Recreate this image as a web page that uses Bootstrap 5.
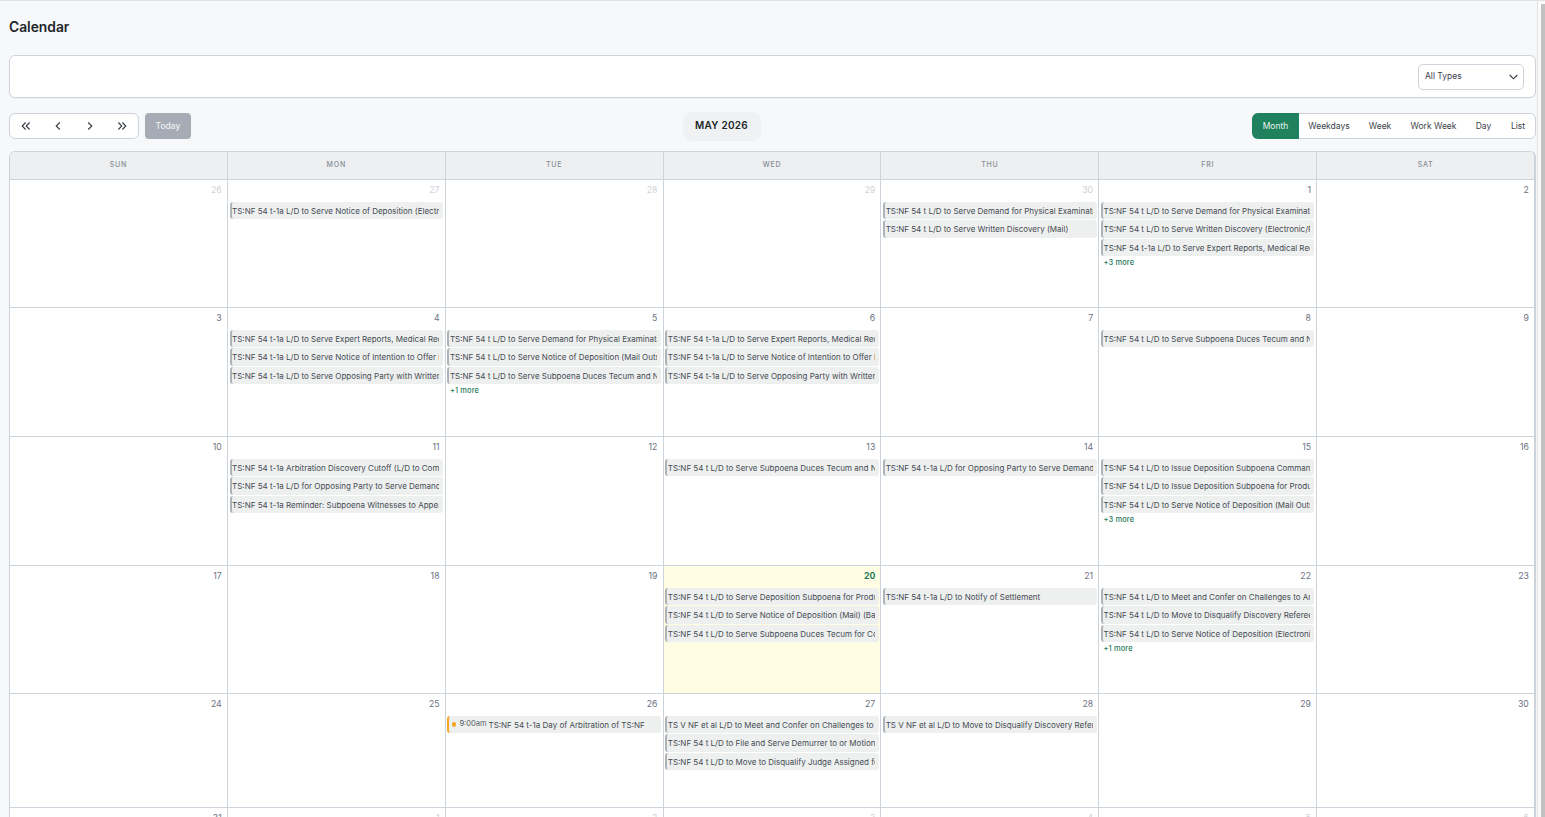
<!DOCTYPE html>
<html lang="en"><head><meta charset="utf-8"><title>Calendar</title>
<link href="https://cdn.jsdelivr.net/npm/bootstrap@5.3.0/dist/css/bootstrap.min.css" rel="stylesheet">
<style>
html,body{height:100%;overflow:hidden}
body{font-family:Inter,"Liberation Sans",sans-serif;background:#f7f8fa;color:#212529}
.shell{height:817px;border-top:1px solid #dfe3e2}
.page{width:1537px;padding:0 1px 0 9px;overflow:hidden;flex:none}
.sbar{width:8px;flex:none;background:#fbfbfb;border-left:1px solid #dfe3e8;padding:3px 0 0 3px}
.sbar div{height:100%;background:#c1c1c1}
h1.title{font-size:13.8px;font-weight:600;line-height:18px;margin:17px 0 19px}
.filter{height:43px;border-color:#cdd3da;border-radius:6px;padding:8px 11px 0 0;box-shadow:0 1px 1px rgba(0,0,0,.03)}
.filter .form-select{width:106px;height:26px;font-size:8.5px;padding:0 0 2px 6px;border-color:#cdd3da;border-radius:5px;color:#3b4149;background-image:none}
.sel{position:relative;width:106px}
.sel svg{position:absolute;right:6px;top:10px;pointer-events:none}
.toolbar{height:30px;margin:13px 0 10px}
.btn-group.cal{background:#fff;border:1px solid #cdd3da;border-radius:6px;height:26px}
.btn-group.cal>.btn,.btn-group.cal>.btn+.btn{border:0;font-size:8.5px;color:#3b4149;padding:0;height:24px;line-height:21px;margin-left:0;flex:none}
.btn-group.cal>.nav-btn{width:32px;display:flex;align-items:center;justify-content:center}
.btn-today{width:46px;height:26px;padding:0;font-size:8.5px;background:#a5acb5;color:#eef0f2;border:0;border-radius:4px;line-height:21px;margin-left:6px;font-weight:500}
.month{font-size:10px;font-weight:600;letter-spacing:.25px;background:#eff1f2;border-radius:9px;width:78px;height:29px;line-height:27px;text-align:center;color:#212529}
.btn-group.cal>.view-on{background:#20815f;color:#e8f3ef;width:47px;height:26px;line-height:23px;margin:-1px 0 -1px -1px;border-radius:6px 0 0 6px}
.btn-group.cal>.b1{width:60px}.btn-group.cal>.b2{width:42px}.btn-group.cal>.b3{width:65px}
.btn-group.cal>.b4{width:35px;border-left:1px solid #cdd3da}.btn-group.cal>.b5{width:34px}
.grid{background:#fff;border:1px solid #cdd3da;border-right-width:2px;border-bottom:0;border-radius:6px 6px 0 0;overflow:hidden}
.wk{display:flex}
.wk.head{height:28px;background:#edeff0}
.h128{height:128px}.h129{height:129px}.h114{height:114px}
.cell{flex:1 1 0;min-width:0;border-right:1px solid #cdd3da;border-bottom:1px solid #cdd3da;padding:0 1.7px}
.cell:last-child{border-right:0}
.head .cell{font-size:7px;letter-spacing:.8px;font-weight:500;color:#868e96;text-align:center;line-height:25px}
.num{font-size:8.7px;color:#6b7280;text-align:right;height:22px;line-height:20px;padding-right:3.5px}
.num.off{color:#ced1d5}
.today{background:#fffde3}
.today .num{color:#1f7a5a;font-weight:700}
.ev{height:17.3px;margin-bottom:1.2px;background:#eef0f0;border-left:2px solid #b0b3b6;border-radius:3px;padding:0 4px 0 .5px;font-size:8px;line-height:18.2px;color:#454b52}
.ev span{display:block;overflow:hidden;white-space:nowrap;height:17.3px}
.ev.timed{border-left-color:#f5a623}
.ev.timed span{display:flex;align-items:center}
.ev i{width:4.5px;height:4.5px;border-radius:50%;background:#f5a623;margin:0 3px 0 2px;flex:none}
.ev small{font-size:7.5px;margin:-2px 2px 0 0;color:#555b62}
.more{font-size:7.5px;font-weight:500;letter-spacing:.1px;color:#1f7a5a;padding-left:2.5px;line-height:11px;display:block;text-decoration:none}
</style></head>
<body>
<div class="shell d-flex">
<div class="page">
<h1 class="title">Calendar</h1>
<div class="card filter d-flex flex-row justify-content-end">
  <div class="sel"><select class="form-select"><option>All Types</option></select>
  <svg width="9" height="6" viewBox="0 0 9 6" fill="none" stroke="#343a40" stroke-width="1.1"><path d="M.7 1l3.8 3.8L8.3 1"/></svg></div>
</div>
<div class="toolbar d-flex align-items-center justify-content-between">
  <div class="d-flex">
    <div class="btn-group cal">
      <button class="btn nav-btn" aria-label="Previous year"><svg width="10" height="10" viewBox="0 0 10 10" fill="none" stroke="#343a40" stroke-width="1.1"><path d="M4.6 1.5L1.2 5l3.4 3.5M8.6 1.5L5.2 5l3.4 3.5"/></svg></button>
      <button class="btn nav-btn" aria-label="Previous"><svg width="10" height="10" viewBox="0 0 10 10" fill="none" stroke="#343a40" stroke-width="1.1"><path d="M6.8 1.5L3.2 5l3.6 3.5"/></svg></button>
      <button class="btn nav-btn" aria-label="Next"><svg width="10" height="10" viewBox="0 0 10 10" fill="none" stroke="#343a40" stroke-width="1.1"><path d="M3.2 1.5L6.8 5 3.2 8.5"/></svg></button>
      <button class="btn nav-btn" aria-label="Next year"><svg width="10" height="10" viewBox="0 0 10 10" fill="none" stroke="#343a40" stroke-width="1.1"><path d="M1.4 1.5L4.8 5 1.4 8.5M5.4 1.5L8.8 5 5.4 8.5"/></svg></button>
    </div>
    <button class="btn btn-today">Today</button>
  </div>
  <div class="month">MAY 2026</div>
  <div class="d-flex justify-content-end">
    <div class="btn-group cal">
      <button class="btn view-on">Month</button><button class="btn b1">Weekdays</button><button class="btn b2">Week</button><button class="btn b3">Work Week</button><button class="btn b4">Day</button><button class="btn b5">List</button>
    </div>
  </div>
</div>
<div class="grid">
  <div class="wk head"><div class="cell">SUN</div><div class="cell">MON</div><div class="cell">TUE</div><div class="cell">WED</div><div class="cell">THU</div><div class="cell">FRI</div><div class="cell">SAT</div></div>

  <div class="wk h128">
    <div class="cell"><div class="num off">26</div></div>
    <div class="cell"><div class="num off">27</div><div class="ev"><span>TS:NF 54 t-1a L/D to Serve Notice of Deposition (Electronic)</span></div></div>
    <div class="cell"><div class="num off">28</div></div>
    <div class="cell"><div class="num off">29</div></div>
    <div class="cell"><div class="num off">30</div><div class="ev"><span>TS:NF 54 t L/D to Serve Demand for Physical Examination</span></div><div class="ev"><span>TS:NF 54 t L/D to Serve Written Discovery (Mail)</span></div></div>
    <div class="cell"><div class="num">1</div><div class="ev"><span>TS:NF 54 t L/D to Serve Demand for Physical Examination</span></div><div class="ev"><span>TS:NF 54 t L/D to Serve Written Discovery (Electronic/Fax)</span></div><div class="ev"><span>TS:NF 54 t-1a L/D to Serve Expert Reports, Medical Records</span></div><a class="more" href="#">+3 more</a></div>
    <div class="cell"><div class="num">2</div></div>
  </div>

  <div class="wk h129">
    <div class="cell"><div class="num">3</div></div>
    <div class="cell"><div class="num">4</div><div class="ev"><span>TS:NF 54 t-1a L/D to Serve Expert Reports, Medical Records</span></div><div class="ev"><span>TS:NF 54 t-1a L/D to Serve Notice of Intention to Offer Proof</span></div><div class="ev"><span>TS:NF 54 t-1a L/D to Serve Opposing Party with Written</span></div></div>
    <div class="cell"><div class="num">5</div><div class="ev"><span>TS:NF 54 t L/D to Serve Demand for Physical Examination</span></div><div class="ev"><span>TS:NF 54 t L/D to Serve Notice of Deposition (Mail Outside)</span></div><div class="ev"><span>TS:NF 54 t L/D to Serve Subpoena Duces Tecum and Notice</span></div><a class="more" href="#">+1 more</a></div>
    <div class="cell"><div class="num">6</div><div class="ev"><span>TS:NF 54 t-1a L/D to Serve Expert Reports, Medical Records</span></div><div class="ev"><span>TS:NF 54 t-1a L/D to Serve Notice of Intention to Offer Proof</span></div><div class="ev"><span>TS:NF 54 t-1a L/D to Serve Opposing Party with Written</span></div></div>
    <div class="cell"><div class="num">7</div></div>
    <div class="cell"><div class="num">8</div><div class="ev"><span>TS:NF 54 t L/D to Serve Subpoena Duces Tecum and Notice</span></div></div>
    <div class="cell"><div class="num">9</div></div>
  </div>

  <div class="wk h129">
    <div class="cell"><div class="num">10</div></div>
    <div class="cell"><div class="num">11</div><div class="ev"><span>TS:NF 54 t-1a Arbitration Discovery Cutoff (L/D to Complete)</span></div><div class="ev"><span>TS:NF 54 t-1a L/D for Opposing Party to Serve Demand</span></div><div class="ev"><span>TS:NF 54 t-1a Reminder: Subpoena Witnesses to Appear</span></div></div>
    <div class="cell"><div class="num">12</div></div>
    <div class="cell"><div class="num">13</div><div class="ev"><span>TS:NF 54 t L/D to Serve Subpoena Duces Tecum and Notice</span></div></div>
    <div class="cell"><div class="num">14</div><div class="ev"><span>TS:NF 54 t-1a L/D for Opposing Party to Serve Demand</span></div></div>
    <div class="cell"><div class="num">15</div><div class="ev"><span>TS:NF 54 t L/D to Issue Deposition Subpoena Command</span></div><div class="ev"><span>TS:NF 54 t L/D to Issue Deposition Subpoena for Production</span></div><div class="ev"><span>TS:NF 54 t L/D to Serve Notice of Deposition (Mail Outside)</span></div><a class="more" href="#">+3 more</a></div>
    <div class="cell"><div class="num">16</div></div>
  </div>

  <div class="wk h128">
    <div class="cell"><div class="num">17</div></div>
    <div class="cell"><div class="num">18</div></div>
    <div class="cell"><div class="num">19</div></div>
    <div class="cell today"><div class="num">20</div><div class="ev"><span>TS:NF 54 t L/D to Serve Deposition Subpoena for Production</span></div><div class="ev"><span>TS:NF 54 t L/D to Serve Notice of Deposition (Mail) (Backup)</span></div><div class="ev"><span>TS:NF 54 t L/D to Serve Subpoena Duces Tecum for Consumer</span></div></div>
    <div class="cell"><div class="num">21</div><div class="ev"><span>TS:NF 54 t-1a L/D to Notify of Settlement</span></div></div>
    <div class="cell"><div class="num">22</div><div class="ev"><span>TS:NF 54 t L/D to Meet and Confer on Challenges to Arbitrator</span></div><div class="ev"><span>TS:NF 54 t L/D to Move to Disqualify Discovery Referee</span></div><div class="ev"><span>TS:NF 54 t L/D to Serve Notice of Deposition (Electronic)</span></div><a class="more" href="#">+1 more</a></div>
    <div class="cell"><div class="num">23</div></div>
  </div>

  <div class="wk h114">
    <div class="cell"><div class="num">24</div></div>
    <div class="cell"><div class="num">25</div></div>
    <div class="cell"><div class="num">26</div><div class="ev timed"><span><i></i><small>9:00am</small>TS:NF 54 t-1a Day of Arbitration of TS:NF</span></div></div>
    <div class="cell"><div class="num">27</div><div class="ev"><span>TS V NF et al L/D to Meet and Confer on Challenges to Arbitrator</span></div><div class="ev"><span>TS:NF 54 t L/D to File and Serve Demurrer to or Motion</span></div><div class="ev"><span>TS:NF 54 t L/D to Move to Disqualify Judge Assigned for Trial</span></div></div>
    <div class="cell"><div class="num">28</div><div class="ev"><span>TS V NF et al L/D to Move to Disqualify Discovery Referee</span></div></div>
    <div class="cell"><div class="num">29</div></div>
    <div class="cell"><div class="num">30</div></div>
  </div>

  <div class="wk h128">
    <div class="cell"><div class="num">31</div></div>
    <div class="cell"><div class="num off">1</div></div>
    <div class="cell"><div class="num off">2</div></div>
    <div class="cell"><div class="num off">3</div></div>
    <div class="cell"><div class="num off">4</div></div>
    <div class="cell"><div class="num off">5</div></div>
    <div class="cell"><div class="num off">6</div></div>
  </div>
</div>
</div>
<div class="sbar"><div></div></div>
</div>
<script src="https://cdn.jsdelivr.net/npm/bootstrap@5.3.0/dist/js/bootstrap.bundle.min.js"></script>
</body></html>
